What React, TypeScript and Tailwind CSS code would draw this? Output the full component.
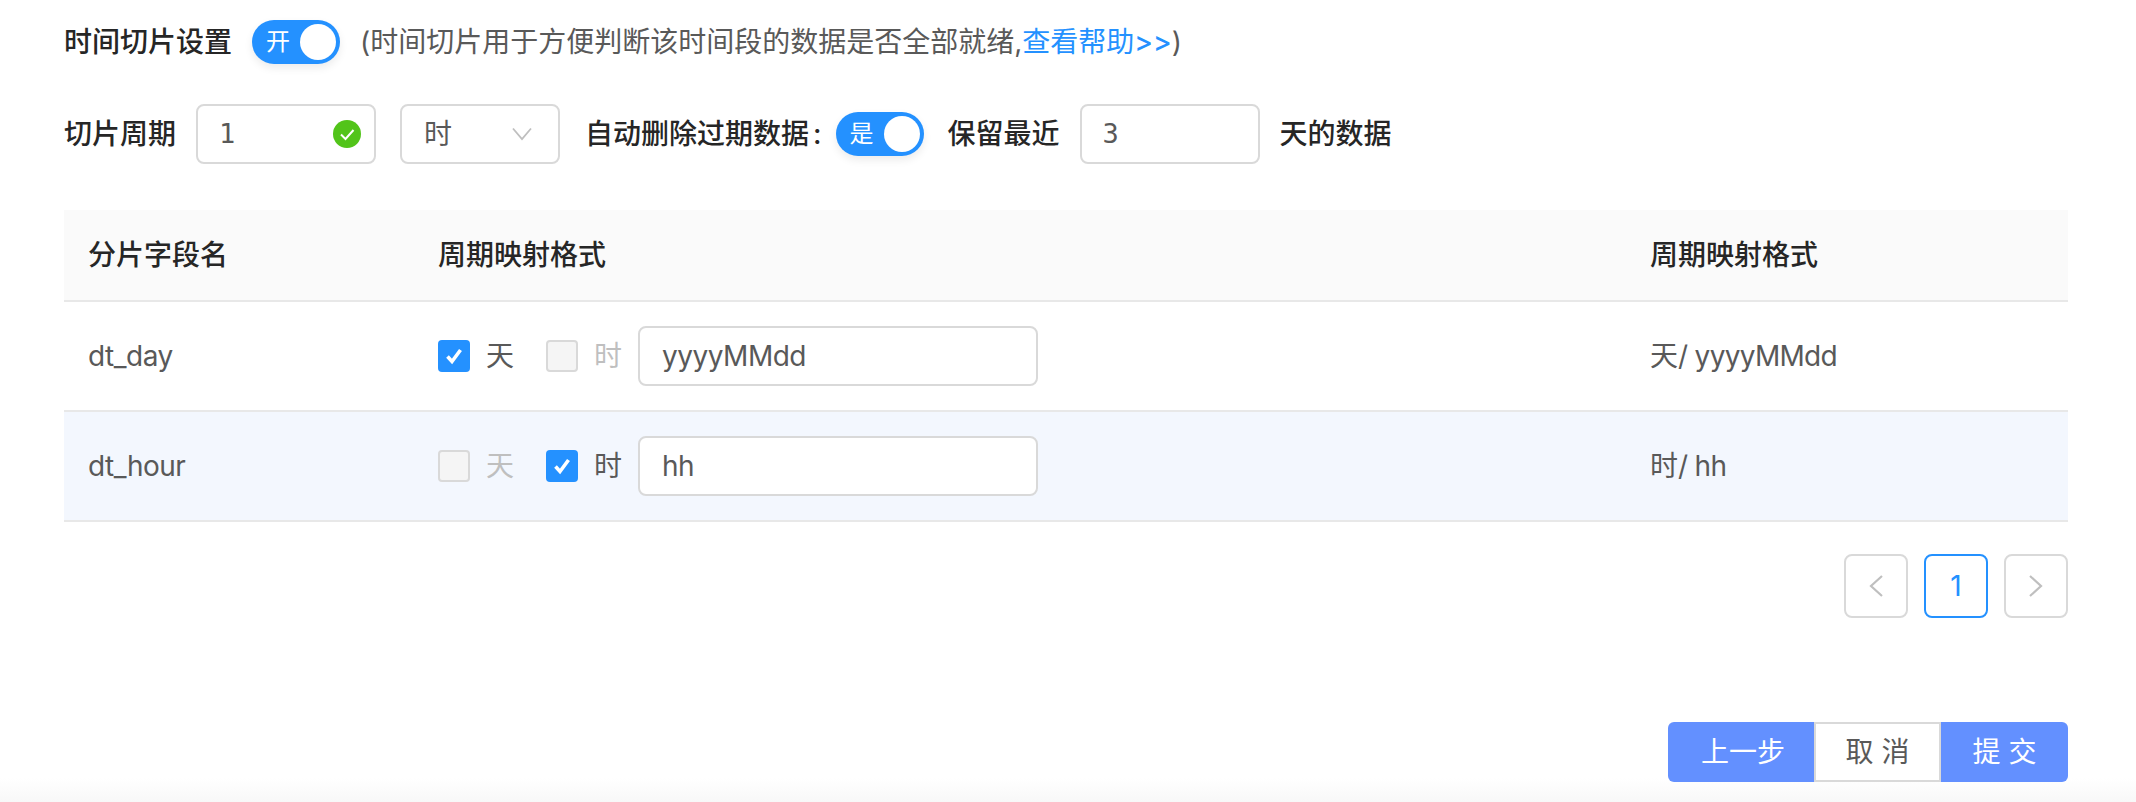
import React from "react";

const font = { fontFamily: '"Inter", "Noto Sans CJK SC", sans-serif' };

function Switch({ label, className = "" }: { label: string; className?: string }) {
  return (
    <div className={`flex h-[44px] w-[88px] shrink-0 items-center rounded-full bg-[#2491ff] pl-[14px] pr-[4px] shadow-[0_4px_8px_rgba(0,0,0,0.08)] ${className}`}>
      <span className="text-[24px] leading-none text-white">{label}</span>
      <span className="ml-auto h-[36px] w-[36px] rounded-full bg-white" />
    </div>
  );
}

function Check({ on, disabled, label }: { on?: boolean; disabled?: boolean; label: string }) {
  return (
    <div className="flex items-center">
      {on ? (
        <span className="flex h-[32px] w-[32px] items-center justify-center rounded-[4px] bg-[#2491ff]">
          <svg width="22" height="22" viewBox="0 0 22 22" fill="none">
            <path d="M4.5 11.5 L9 16.5 L17.5 5" stroke="#fff" strokeWidth="3.6" />
          </svg>
        </span>
      ) : (
        <span className="h-[32px] w-[32px] rounded-[4px] border-2 border-[#d9d9d9] bg-[#f5f5f5]" />
      )}
      <span className={`ml-[16px] text-[28px] leading-none ${disabled ? "text-[#bfbfbf]" : "text-[#595959]"}`}>{label}</span>
    </div>
  );
}

function Row({ name, day, value, unit, className = "" }: { name: string; day: boolean; value: string; unit: string; className?: string }) {
  return (
    <div className={`flex h-[110px] items-center border-b-2 border-[#e8e8e8] text-[28px] text-[#595959] ${className}`}>
      <div className="w-[374px] shrink-0 pl-[24px] tracking-[-0.5px]">{name}</div>
      <div className="flex w-[1212px] shrink-0 items-center">
        <Check on={day} disabled={!day} label="天" />
        <div className="ml-[32px]">
          <Check on={!day} disabled={day} label="时" />
        </div>
        <div className="ml-[16px] flex h-[60px] w-[400px] items-center rounded-[8px] border-2 border-[#d9d9d9] bg-white pl-[22px] tracking-[-0.5px]">{value}</div>
      </div>
      <div>
        {unit}<span className="tracking-[-0.7px]">/ {value}</span>
      </div>
    </div>
  );
}

function PageBtn({ children, active }: { children: React.ReactNode; active?: boolean }) {
  return (
    <div className={`flex h-[64px] w-[64px] items-center justify-center rounded-[8px] border-2 bg-white text-[28px] ${active ? "border-[#2491ff] text-[#2491ff]" : "border-[#d9d9d9] text-[#bfbfbf]"}`}>
      {children}
    </div>
  );
}

export default function App() {
  return (
    <div style={font} className="flex h-[802px] w-[2136px] flex-col overflow-hidden bg-gradient-to-b from-white from-[97%] to-[#f8f8f8] pl-[64px] pr-[68px] pt-[20px]">
      <div className="flex h-[44px] items-center text-[28px]">
        <span className="font-medium text-[#262626]">时间切片设置</span>
        <Switch label="开" className="ml-[20px]" />
        <span className="ml-[20px] text-[#595959]">(时间切片用于方便判断该时间段的数据是否全部就绪,<span className="text-[#2491ff]">查看帮助<span className="font-medium">&gt;&gt;</span></span>)</span>
      </div>

      <div className="mt-[40px] flex h-[60px] items-center text-[28px]">
        <span className="font-medium text-[#262626]">切片周期</span>
        <div className="ml-[20px] flex h-[60px] w-[180px] items-center justify-between rounded-[8px] border-2 border-[#d9d9d9] pl-[21px] pr-[13px] text-[#595959]">
          <span className="font-['DejaVu_Sans_Mono'] text-[27px]">1</span>
          <svg width="28" height="28" viewBox="0 0 28 28" fill="none">
            <circle cx="14" cy="14" r="14" fill="#52c41a" />
            <path d="M8 14.5 L12.5 19 L20.5 10" stroke="#fff" strokeWidth="2" />
          </svg>
        </div>
        <div className="ml-[24px] flex h-[60px] w-[160px] items-center justify-between rounded-[8px] border-2 border-[#d9d9d9] pl-[22px] pr-[26px] text-[#595959]">
          <span>时</span>
          <svg width="20" height="14" viewBox="0 0 20 14" fill="none">
            <path d="M1 1.5 L10 12 L19 1.5" stroke="#bfbfbf" strokeWidth="1.8" />
          </svg>
        </div>
        <span className="ml-[25px] font-medium text-[#262626]">自动删除过期数据<span className="ml-[4px]">:</span></span>
        <Switch label="是" className="ml-[14px]" />
        <span className="ml-[24px] font-medium text-[#262626]">保留最近</span>
        <div className="ml-[20px] flex h-[60px] w-[180px] items-center rounded-[8px] border-2 border-[#d9d9d9] pl-[21px] font-['DejaVu_Sans_Mono'] text-[27px] text-[#595959]">3</div>
        <span className="ml-[20px] font-medium text-[#262626]">天的数据</span>
      </div>

      <div className="mt-[46px]">
        <div className="flex h-[92px] items-center border-b-2 border-[#e8e8e8] bg-[#fafafa] text-[28px] font-medium text-[#262626]">
          <div className="w-[374px] shrink-0 pl-[24px]">分片字段名</div>
          <div className="w-[1212px] shrink-0">周期映射格式</div>
          <div>周期映射格式</div>
        </div>
        <Row name="dt_day" day value="yyyyMMdd" unit="天" />
        <Row name="dt_hour" day={false} value="hh" unit="时" className="bg-[#f3f7fe]" />
      </div>

      <div className="mt-[32px] flex justify-end gap-[16px]">
        <PageBtn>
          <svg width="16" height="24" viewBox="0 0 16 24" fill="none"><path d="M14 2 L3 12 L14 22" stroke="#bfbfbf" strokeWidth="2.2" /></svg>
        </PageBtn>
        <PageBtn active>1</PageBtn>
        <PageBtn>
          <svg width="16" height="24" viewBox="0 0 16 24" fill="none"><path d="M2 2 L13 12 L2 22" stroke="#bfbfbf" strokeWidth="2.2" /></svg>
        </PageBtn>
      </div>

      <div className="mt-[104px] flex justify-end text-[28px]">
        <div className="flex h-[60px] w-[146px] items-center justify-center rounded-l-[6px] bg-[#6390ff] pl-[4px] text-white">上一步</div>
        <div className="flex h-[60px] w-[127px] items-center justify-center border-2 border-[#d9d9d9] bg-white text-[#595959]">取 消</div>
        <div className="flex h-[60px] w-[127px] items-center justify-center rounded-r-[6px] bg-[#6390ff] text-white">提 交</div>
      </div>
    </div>
  );
}
